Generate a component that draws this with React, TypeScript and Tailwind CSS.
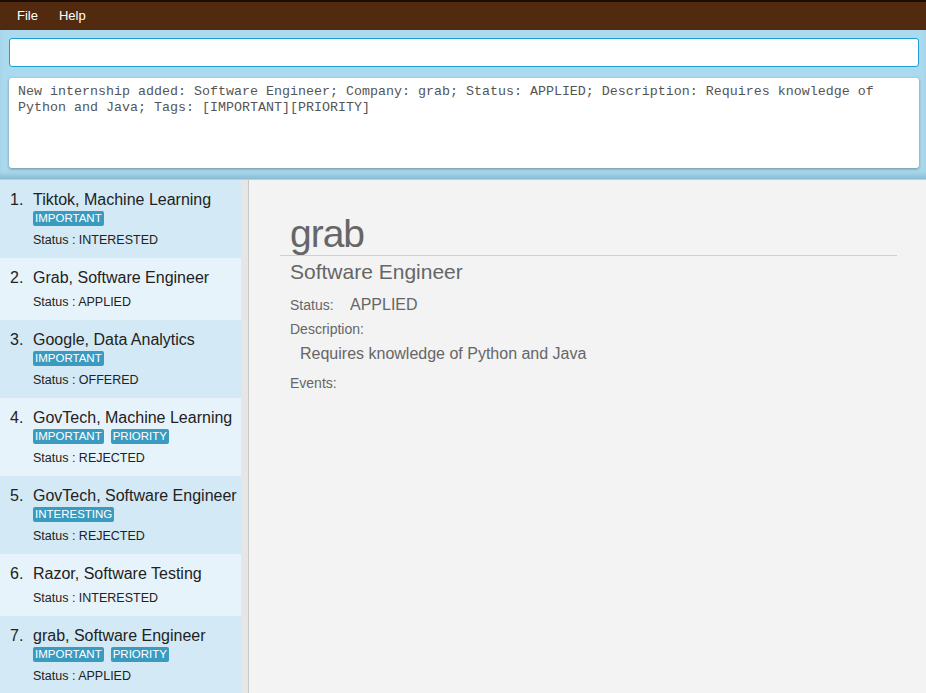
import React from "react";

interface Internship {
  company: string;
  role: string;
  tags: string[];
  status: string;
}

const internships: Internship[] = [
  { company: "Tiktok", role: "Machine Learning", tags: ["IMPORTANT"], status: "INTERESTED" },
  { company: "Grab", role: "Software Engineer", tags: [], status: "APPLIED" },
  { company: "Google", role: "Data Analytics", tags: ["IMPORTANT"], status: "OFFERED" },
  { company: "GovTech", role: "Machine Learning", tags: ["IMPORTANT", "PRIORITY"], status: "REJECTED" },
  { company: "GovTech", role: "Software Engineer", tags: ["INTERESTING"], status: "REJECTED" },
  { company: "Razor", role: "Software Testing", tags: [], status: "INTERESTED" },
  { company: "grab", role: "Software Engineer", tags: ["IMPORTANT", "PRIORITY"], status: "APPLIED" },
];

const sans = "font-['Liberation_Sans',Arial,sans-serif]";

const App = () => {
  return (
    <div className={`w-[926px] h-[693px] flex flex-col overflow-hidden bg-[#f3f3f3] ${sans}`}>
      {/* menu bar */}
      <div className="h-[30px] shrink-0 bg-[#522a10] border-t-2 border-[#1c0d03] flex items-center gap-[21px] pl-[17px] text-[13px] text-white">
        <span>File</span>
        <span>Help</span>
      </div>

      {/* command area */}
      <div className="h-[150px] shrink-0 bg-[#abd9ed] px-[9px] pt-[8px] shadow-[inset_0_-7px_6px_-4px_rgba(60,120,150,0.35)] border-b border-[#c9c9c9]">
        <div className="h-[29px] w-[910px] bg-white rounded-[3px] border-[1.5px] border-[#1e9cd7]" />
        <div className="mt-[11px] h-[90px] w-[910px] bg-white rounded-[3px] shadow-[0_1px_3px_rgba(0,0,0,0.35)] px-[9px] pt-[6px] font-['Liberation_Mono','Courier_New',monospace] text-[13.33px] leading-[16px] text-[#555]">
          New internship added: Software Engineer; Company: grab; Status: APPLIED; Description: Requires knowledge of Python and Java; Tags: [IMPORTANT][PRIORITY]
        </div>
      </div>

      <div className="flex flex-1 min-h-0">
        {/* list */}
        <div className="w-[241px] shrink-0 flex flex-col">
          {internships.map((item, i) => (
            <div
              key={i}
              className={`flex pl-[10px] pt-[10px] pb-[8px] text-[#222] ${i % 2 === 0 ? "bg-[#d3e9f5]" : "bg-[#e7f3fa]"}`}
            >
              <span className="w-[23px] text-[16px] leading-[20px]">{i + 1}.</span>
              <div className="flex flex-col">
                <div className="text-[16px] leading-[20px] whitespace-nowrap">
                  {item.company}, {item.role}
                </div>
                {item.tags.length > 0 && (
                  <div className="flex gap-[7px] mt-[1px] h-[15px]">
                    {item.tags.map((t) => (
                      <span
                        key={t}
                        className="bg-[#3a9bc1] text-white text-[11.5px] leading-[15px] px-[2px] rounded-[2px]"
                      >
                        {t}
                      </span>
                    ))}
                  </div>
                )}
                <div className="mt-[4px] text-[12.5px] leading-[20px]">Status : {item.status}</div>
              </div>
            </div>
          ))}
        </div>

        {/* divider strip */}
        <div className="w-[8px] shrink-0 bg-[#e6e6e6] border-r border-[#c8c8c8]" />

        {/* details */}
        <div className="flex-1 bg-[#f3f3f3] pl-[31px] pr-[29px] pt-[33px] text-[#666]">
          <div className="pl-[10px] text-[39px] leading-[42px] tracking-[-1px]">grab</div>
          <div className="border-t border-[#cfcfcf]" />
          <div className="pl-[10px] mt-[2px] text-[21px] leading-[28px]">Software Engineer</div>
          <div className="pl-[10px] mt-[7px] flex items-baseline leading-[24px]">
            <span className="text-[14px] w-[60px]">Status:</span>
            <span className="text-[16px]">APPLIED</span>
          </div>
          <div className="pl-[10px] text-[14px] leading-[24px]">Description:</div>
          <div className="pl-[20px] text-[16px] leading-[26px]">Requires knowledge of Python and Java</div>
          <div className="pl-[10px] mt-[3px] text-[14px] leading-[26px]">Events:</div>
        </div>
      </div>
    </div>
  );
};

export default App;
